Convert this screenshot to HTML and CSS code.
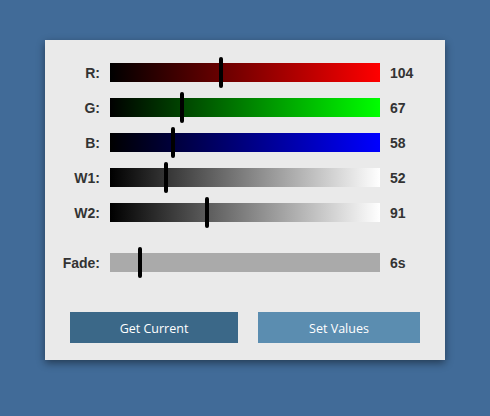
FILE: index.html
```html
<!DOCTYPE html>
<html>
<head>
<meta charset="utf-8">
<link rel="stylesheet" href="styles.css">
</head>
<body>
<div class="panel">
  <div class="rows">
    <div class="row">
      <span class="label">R:</span>
      <div class="track red"><span class="thumb" style="left:108.5px"></span></div>
      <span class="value">104</span>
    </div>
    <div class="row">
      <span class="label">G:</span>
      <div class="track green"><span class="thumb" style="left:69.9px"></span></div>
      <span class="value">67</span>
    </div>
    <div class="row">
      <span class="label">B:</span>
      <div class="track blue"><span class="thumb" style="left:60.5px"></span></div>
      <span class="value">58</span>
    </div>
    <div class="row">
      <span class="label">W1:</span>
      <div class="track white"><span class="thumb" style="left:54.2px"></span></div>
      <span class="value">52</span>
    </div>
    <div class="row">
      <span class="label">W2:</span>
      <div class="track white"><span class="thumb" style="left:94.9px"></span></div>
      <span class="value">91</span>
    </div>
    <div class="row fade-row">
      <span class="label">Fade:</span>
      <div class="track grey"><span class="thumb" style="left:28px"></span></div>
      <span class="value">6s</span>
    </div>
  </div>
  <div class="buttons">
    <button class="btn get">Get Current</button>
    <button class="btn set">Set Values</button>
  </div>
</div>
</body>
</html>
```
FILE: styles.css
```css
html, body {
  margin: 0;
  padding: 0;
  background: #416b98;
  height: 416px;
  overflow: hidden;
}
body {
  padding: 40px 45px;
  box-sizing: border-box;
  font-family: "Liberation Sans", Arial, sans-serif;
}
.panel {
  width: 400px;
  height: 320px;
  background: #eaeaea;
  box-shadow: 0 3px 8px rgba(0, 0, 0, 0.45);
  box-sizing: border-box;
  padding-top: 23px;
}
.rows {
  display: flex;
  flex-direction: column;
  gap: 16px;
}
.row {
  display: flex;
  align-items: center;
  height: 19px;
}
.fade-row {
  margin-top: 15px;
}
.label {
  width: 55px;
  text-align: right;
  font-weight: bold;
  font-size: 14px;
  color: #333;
  margin-right: 10px;
}
.value {
  margin-left: 10px;
  font-weight: bold;
  font-size: 14px;
  color: #333;
}
.track {
  position: relative;
  width: 270px;
  height: 19px;
}
.red { background: linear-gradient(to right, #000, #ff0000); }
.green { background: linear-gradient(to right, #000, #00ff00); }
.blue { background: linear-gradient(to right, #000, #0000ff); }
.white { background: linear-gradient(to right, #000, #ffffff); }
.grey { background: #aaaaaa; }
.thumb {
  position: absolute;
  top: -6px;
  width: 4px;
  height: 31px;
  background: #000;
  border-radius: 2px;
}
.buttons {
  display: flex;
  gap: 20px;
  padding: 0 25px;
  margin-top: 40px;
}
.btn {
  height: 31px;
  border: none;
  color: #fff;
  font-family: "Open Sans", "Noto Sans", sans-serif;
  font-size: 12.5px;
  padding: 2px 0 0 0;
  margin: 0;
}
.get { width: 168px; background: #3b6888; }
.set { width: 162px; background: #5b8db0; }
```
